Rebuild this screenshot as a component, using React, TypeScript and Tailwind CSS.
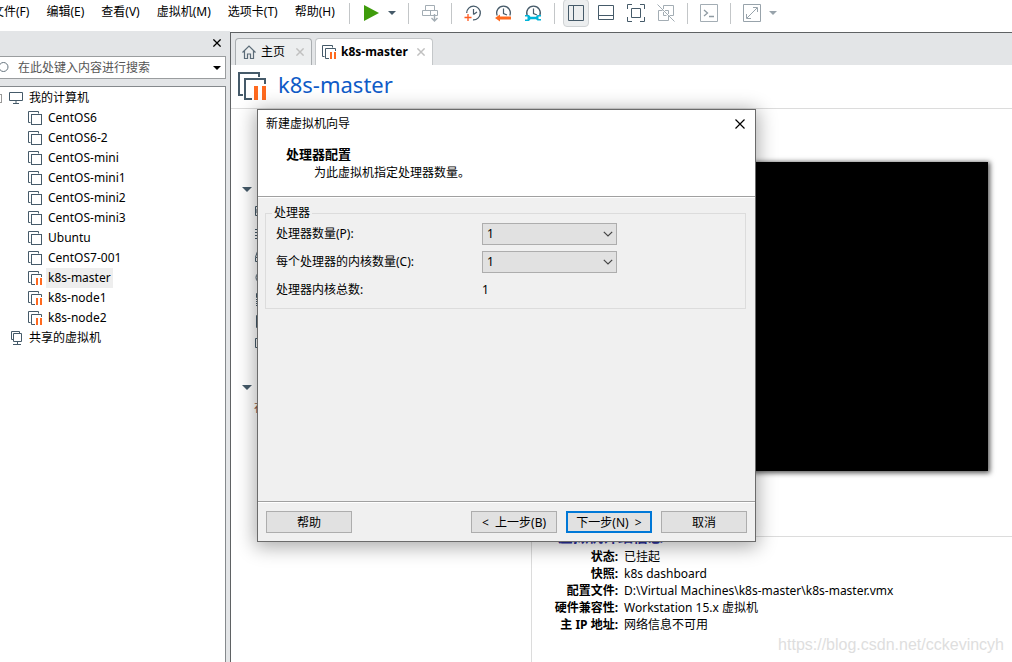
import React from "react";

const vms = [
  { name: "CentOS6" },
  { name: "CentOS6-2" },
  { name: "CentOS-mini" },
  { name: "CentOS-mini1" },
  { name: "CentOS-mini2" },
  { name: "CentOS-mini3" },
  { name: "Ubuntu" },
  { name: "CentOS7-001" },
  { name: "k8s-master", paused: true, selected: true },
  { name: "k8s-node1", paused: true },
  { name: "k8s-node2", paused: true },
];

const menus = ["文件(F)", "编辑(E)", "查看(V)", "虚拟机(M)", "选项卡(T)", "帮助(H)"];

const details = [
  ["状态:", "已挂起"],
  ["快照:", "k8s dashboard"],
  ["配置文件:", "D:\\Virtual Machines\\k8s-master\\k8s-master.vmx"],
  ["硬件兼容性:", "Workstation 15.x 虚拟机"],
  ["主 IP 地址:", "网络信息不可用"],
];

function VmIcon({ paused, className = "size-3.5" }: { paused?: boolean; className?: string }) {
  return (
    <svg viewBox="0 0 14 14" className={`${className} shrink-0`} fill="none" stroke="#455a69" aria-hidden="true">
      <path d="M10.5 2.5V.5H.5v11h2" />
      {paused ? (
        <>
          <path d="M13.5 6V3.5h-10v10H7" />
          <path d="M8 7h2v7H8zM12 7h2v7h-2z" fill="#ff6a1f" stroke="none" />
        </>
      ) : (
        <rect x="3.5" y="3.5" width="10" height="10" />
      )}
    </svg>
  );
}

function MonitorIcon() {
  return (
    <svg viewBox="0 0 14 12" className="h-3 w-3.5 shrink-0" fill="none" stroke="#455a69" aria-hidden="true">
      <path d="M.5.5h13v8H.5zM7 9v2M4 11.5h6" />
    </svg>
  );
}

function SharedIcon() {
  return (
    <svg viewBox="0 0 12 14" className="h-3.5 w-3 shrink-0" fill="none" stroke="#455a69" aria-hidden="true">
      <path d="M8.5 2V.5h-8v8H2M2.5 2.5h8v8h-8zM6.5 11v2M2 13.5h8" />
    </svg>
  );
}

function CrossIcon({ className }: { className: string }) {
  return (
    <svg viewBox="0 0 10 10" className={className} fill="none" stroke="currentColor" aria-hidden="true">
      <path d="M.5.5l9 9M9.5.5l-9 9" />
    </svg>
  );
}

function Caret({ className }: { className: string }) {
  return (
    <svg viewBox="0 0 10 5" className={className} fill="currentColor" aria-hidden="true">
      <path d="M0 0h10L5 5z" />
    </svg>
  );
}

function Clock() {
  return (
    <>
      <path d="M3.2 11.5A6.8 6.8 0 1 1 15.8 11.5" stroke="#455a69" strokeWidth="1.3" />
      <path d="M9.5 4.5v5l3.5 1.5" stroke="#455a69" strokeWidth="1.2" />
    </>
  );
}

function Sep() {
  return <div className="mx-1.5 h-[21px] w-px shrink-0 bg-[#c3c6c8]" />;
}

function ToolButton({ label, children, active }: { label: string; children: React.ReactNode; active?: boolean }) {
  return (
    <button aria-label={label} className="flex h-7 w-[30px] shrink-0 items-center justify-center">
      <span
        className={
          active
            ? "flex h-7 w-[26px] items-center justify-center rounded-sm border border-[#d0d3d5] bg-[#eceeef]"
            : "flex"
        }
      >
        <svg viewBox="0 0 18 18" className="size-[18px] shrink-0" fill="none" stroke="#455a69" strokeWidth="1">
          {children}
        </svg>
      </span>
    </button>
  );
}

function Toolbar() {
  return (
    <div className="flex h-[26px] items-center">
      <Sep />
      <ToolButton label="继续">
        <path d="M2 1l15 8-15 8z" fill="#3f9c0b" stroke="none" />
      </ToolButton>
      <button aria-label="电源选项" className="mr-1 flex w-3 justify-center text-[#455a69]">
        <Caret className="h-1 w-2" />
      </button>
      <Sep />
      <ToolButton label="发送按键">
        <g stroke="#a3adb4">
          <path d="M4.5 1.500h9v5h-9zM1.500 6.500h8v5h-8zM9.500 6.500h7v5h-7z" />
          <path d="M13.500 10v7M10.500 14l3 3 3-3" strokeWidth="1.400" />
        </g>
      </ToolButton>
      <Sep />
      <ToolButton label="拍摄快照">
        <path d="M2.700 9A6.800 6.800 0 1 1 9 15.800" stroke="#455a69" strokeWidth="1.300" />
        <path d="M9.500 5v5.500M9.500 10.500L13 8" stroke="#455a69" strokeWidth="1.200" />
        <path d="M4 10v7M.5 13.500h7" stroke="#ff5a1f" strokeWidth="1.300" />
      </ToolButton>
      <ToolButton label="恢复快照">
        <Clock />
        <path d="M1 14l5-3.500v2h11v3H6v2z" fill="#ff6a1f" stroke="none" />
      </ToolButton>
      <ToolButton label="管理快照">
        <Clock />
        <path
          d="M1 11h4l1.500 1.700h5.500l1.500-1.700H17v1.500h-2.500v2.500H17v1.500h-3.500L12 15.300H6.500L5 17H1v-1.500h2.500v-3H1z"
          fill="#00b4d8"
          stroke="none"
        />
      </ToolButton>
      <Sep />
      <ToolButton label="显示库" active>
        <path d="M1.500 1.500h15v15h-15zM6.500 1.500v15" />
      </ToolButton>
      <ToolButton label="缩略图栏">
        <path d="M1.500 1.500h15v14h-15zM1.500 11.500h15" />
      </ToolButton>
      <ToolButton label="全屏">
        <path d="M.5 5V.5H5M13 .5h4.500V5M17.500 13v4.500H13M5 17.500H.5V13" />
        <path d="M4.500 4.500h9v9h-9z" />
      </ToolButton>
      <ToolButton label="Unity">
        <path d="M6.500 5V1.500h10v10h-4M11.500 12v4.500h-10v-10h4M6.500 8v3.500h3M8 6.500h3.500V10M.5.5l17 17" stroke="#a3adb4" />
      </ToolButton>
      <Sep />
      <ToolButton label="控制台">
        <path d="M.5.5h17v17H.5z" stroke="#a3adb4" />
        <path d="M4 6l3.500 3L4 12M9 12.500h5" stroke="#8f9ba3" strokeWidth="1.300" />
      </ToolButton>
      <Sep />
      <ToolButton label="拉伸">
        <path d="M.5.5h17v17H.5zM4 14L14 4M10 3.500h4.500V8M3.500 10v4.500H8" stroke="#98a3ab" />
      </ToolButton>
      <button aria-label="拉伸选项" className="flex w-3 justify-center text-[#98a3ab]">
        <Caret className="h-1 w-2" />
      </button>
    </div>
  );
}

function Sidebar() {
  return (
    <aside className="flex w-[230px] shrink-0 flex-col bg-[#e3e5e7] pr-1">
      <div className="flex h-6 items-center justify-end pr-[3px]">
        <button aria-label="关闭库" className="flex p-0.5 text-black">
          <CrossIcon className="size-2 stroke-[1.6]" />
        </button>
      </div>
      <div className="mt-px mb-[7px] flex h-[23px] items-center border border-l-0 border-[#9a9d9f] bg-white pr-1">
        <svg viewBox="0 0 9 12" className="h-3 w-[9px] shrink-0" fill="none" stroke="#66747e" aria-hidden="true">
          <circle cx="3.5" cy="5" r="4.5" />
        </svg>
        <input
          aria-label="搜索"
          placeholder="在此处键入内容进行搜索"
          className="ml-[9px] min-w-0 flex-1 bg-transparent text-xs outline-none placeholder:text-[#555]"
        />
        <button aria-label="搜索选项" className="flex">
          <Caret className="h-1 w-2" />
        </button>
      </div>
      <nav className="flex-1 border-t border-r border-[#85898c] bg-white pt-px">
        <div className="flex h-5 items-center">
          <span className="mr-[7px] h-[9px] w-0.5 border border-l-0 border-[#999]" />
          <MonitorIcon />
          <span className="ml-1.5">我的计算机</span>
        </div>
        <ul>
          {vms.map((vm) => (
            <li key={vm.name} className="flex h-5 items-center pl-7">
              <VmIcon paused={vm.paused} />
              <a href="#" className={vm.selected ? "ml-1 bg-[#eee] px-0.5 leading-5" : "ml-1 px-0.5 leading-5"}>
                {vm.name}
              </a>
            </li>
          ))}
        </ul>
        <div className="flex h-5 items-center pl-[11px]">
          <SharedIcon />
          <span className="ml-1.5">共享的虚拟机</span>
        </div>
      </nav>
    </aside>
  );
}

function Tabs() {
  return (
    <div className="flex h-8 items-end gap-[3px] bg-[#e3e5e7] pl-1">
      <div className="flex h-[27px] w-[77px] items-center rounded-t border border-b-0 border-[#a9adb0] bg-[#eceeef] pl-1.5">
        <svg viewBox="0 0 14 14" className="size-3.5 shrink-0" fill="none" stroke="#5c6c78" strokeWidth="1.2" aria-hidden="true">
          <path d="M.5 7.5L7 1l6.5 6.5M2.500 6v7.500h3v-4.500h3v4.500h3V6" />
        </svg>
        <button className="ml-[5px]">主页</button>
        <button aria-label="关闭主页" className="ml-auto flex pr-[7px] text-[#c0c0c0]">
          <CrossIcon className="size-2 stroke-[1.8]" />
        </button>
      </div>
      <div className="flex h-[27px] w-[118px] items-center rounded-t border border-b-0 border-[#c4c7c9] bg-white pl-1.5">
        <VmIcon paused />
        <button className="ml-[5px] font-bold">k8s-master</button>
        <button aria-label="关闭 k8s-master" className="ml-auto flex pr-[7px] text-[#c0c0c0]">
          <CrossIcon className="size-2 stroke-[1.8]" />
        </button>
      </div>
    </div>
  );
}

function DevicePane() {
  const stroke = { fill: "none", stroke: "#455a69" };
  return (
    <section className="w-[301px] shrink-0 border-r border-[#dcdcdc] pl-[11px]">
      <div className="flex h-[70px] flex-col gap-2 pt-2 pl-[15px]">
        <svg viewBox="0 0 12 12" className="size-3" fill="#3f9c0b"><path d="M0 0l12 6-12 6z" /></svg>
        <svg viewBox="0 0 12 12" className="size-3" {...stroke}><path d="M.5.5h11v11H.5z" /></svg>
      </div>
      <button aria-label="设备" className="flex h-5 items-center text-[#455a69]">
        <Caret className="h-[5px] w-2.5" />
      </button>
      <div className="flex flex-col gap-[9px] pt-1.5 pl-[13px]">
        <svg viewBox="0 0 12 13" className="h-[13px] w-3" {...stroke}><path d="M.5 1.5h11v9H.5zM2 4h4v4H2z" /></svg>
        <svg viewBox="0 0 12 13" className="h-[13px] w-3" {...stroke}><path d="M0 2.5h12M0 5.500h12M0 8.500h12M0 11.500h12" strokeDasharray="2 1" /></svg>
        <svg viewBox="0 0 12 13" className="h-[13px] w-3" {...stroke}><path d="M.5 12.500h11v-4H.5zM.5 8L3 1h6l2.500 7" /></svg>
        <svg viewBox="0 0 12 13" className="h-[13px] w-3" {...stroke}><circle cx="6" cy="6.5" r="5" /></svg>
        <svg viewBox="0 0 12 13" className="h-[13px] w-3" {...stroke}><path d="M1.500.5h9v4h-9z" /><path d="M1.500 6v7M4.500 6v7M7.500 6v7" strokeDasharray="1 1" /></svg>
        <svg viewBox="0 0 12 13" className="h-[13px] w-3" {...stroke}><path d="M1.500.5h9v12h-9z" /></svg>
        <svg viewBox="0 0 12 13" className="h-[13px] w-3" {...stroke}><path d="M.5 1.500h11v9H.5z" /></svg>
      </div>
      <button aria-label="描述" className="mt-[27px] flex h-5 items-center text-[#455a69]">
        <Caret className="h-[5px] w-2.5" />
      </button>
      <p className="pl-3 leading-[22px] text-[#8a5a4a]">在此处键入对该虚拟机的描述</p>
    </section>
  );
}

function DetailPane() {
  return (
    <section className="flex min-w-0 flex-1 flex-col">
      <div className="mt-[53px] mr-6 h-[309px] w-[412px] self-end bg-black shadow-[1px_1px_5px_1px_#000a]" />
      <div className="mt-[54px] flex h-[22px] items-center gap-2 pl-[26px]">
        <h2 className="shrink-0 text-[15px] font-bold text-[#2a2f9c]">虚拟机详细信息</h2>
        <div className="h-px flex-1 bg-[#dcdcdc]" />
      </div>
      <dl className="mt-px grid grid-cols-[86px_1fr] gap-x-1.5 leading-[17px]">
        {details.map(([k, v]) => (
          <React.Fragment key={k}>
            <dt className="text-right font-bold whitespace-nowrap">{k}</dt>
            <dd className="whitespace-nowrap">{v}</dd>
          </React.Fragment>
        ))}
      </dl>
    </section>
  );
}

function CountSelect({ id, label }: { id: string; label: string }) {
  return (
    <div className="flex h-7 items-center">
      <label htmlFor={id} className="w-[206px]">{label}</label>
      <div className="relative">
        <select id={id} className="block h-[22px] w-[135px] appearance-none border border-[#adadad] bg-[#e1e1e1] pl-1 outline-none">
          <option>1</option>
          <option>2</option>
          <option>4</option>
        </select>
        <svg viewBox="0 0 10 6" className="pointer-events-none absolute top-2 right-1 h-1.5 w-2.5" fill="none" stroke="#444" strokeWidth="1.2">
          <path d="M.8.8L5 5 9.2.8" />
        </svg>
      </div>
    </div>
  );
}

function WizardDialog() {
  const button = "h-[22px] w-[86px] border border-[#adadad] bg-[#e1e1e1] pt-px whitespace-pre";
  return (
    <div
      role="dialog"
      aria-label="新建虚拟机向导"
      className="absolute top-[109px] left-[257px] flex h-[433px] w-[499px] flex-col border border-[#6b6b6b] bg-[#f0f0f0] shadow-[0_3px_18px_2px_#0005]"
    >
      <header className="h-[87px] border-b border-[#a0a0a0] bg-white">
        <div className="flex h-7 items-center justify-between pr-2.5 pl-2">
          <span>新建虚拟机向导</span>
          <button aria-label="关闭" className="flex">
            <CrossIcon className="size-2.5 stroke-[1.2]" />
          </button>
        </div>
        <h1 className="mt-[7px] pl-7 text-[13px] leading-[18px] font-bold">处理器配置</h1>
        <p className="pl-14 leading-5">为此虚拟机指定处理器数量。</p>
      </header>
      <div className="flex-1 border-t border-white pt-2 pr-[9px] pl-[7px]">
        <fieldset className="border border-[#dcdcdc] px-2.5 pb-1">
          <legend className="-ml-1 px-0.5 leading-[14px]">处理器</legend>
          <CountSelect id="cpus" label="处理器数量(P):" />
          <CountSelect id="cores" label="每个处理器的内核数量(C):" />
          <div className="flex h-7 items-center">
            <span className="w-[206px]">处理器内核总数:</span>
            <output>1</output>
          </div>
        </fieldset>
      </div>
      <footer className="flex h-10 gap-[9px] border-t border-[#a0a0a0] pt-[9px] px-2 shadow-[inset_0_1px_0_#fff]">
        <button className={button}>帮助</button>
        <button className={`${button} ml-auto`}>&lt;  上一步(B)</button>
        <button className="h-[22px] w-[86px] border-2 border-[#0078d7] bg-[#e1e1e1] pt-px whitespace-pre">下一步(N)  &gt;</button>
        <button className={button}>取消</button>
      </footer>
    </div>
  );
}

export default function App() {
  return (
    <div className="relative flex h-screen flex-col overflow-hidden bg-white font-['Noto_Sans','Noto_Sans_CJK_SC',sans-serif] text-xs text-black">
      <header className="flex h-[31px] shrink-0 items-start">
        <nav className="-ml-2 flex h-6 w-[351px] shrink-0 items-center gap-[17px] whitespace-nowrap">
          {menus.map((m) => (
            <button key={m} className="shrink-0">{m}</button>
          ))}
        </nav>
        <Toolbar />
      </header>
      <div className="flex min-h-0 flex-1">
        <Sidebar />
        <main className="mt-px flex min-w-0 flex-1 flex-col border-t border-l border-[#5f6264]">
          <Tabs />
          <div className="flex h-11 shrink-0 items-center gap-3 border-b border-[#dcdcdc] pb-0.5 pl-[7px]">
            <VmIcon paused className="size-7" />
            <h1 className="pb-1 text-[22px] leading-8 text-[#0f5bc7]">k8s-master</h1>
          </div>
          <div className="flex min-h-0 flex-1">
            <DevicePane />
            <DetailPane />
          </div>
        </main>
      </div>
      <WizardDialog />
      <div className="pointer-events-none absolute right-2 bottom-[5px] font-['Liberation_Sans',sans-serif] text-base text-[#dedede]">
        https://blog.csdn.net/cckevincyh
      </div>
    </div>
  );
}
